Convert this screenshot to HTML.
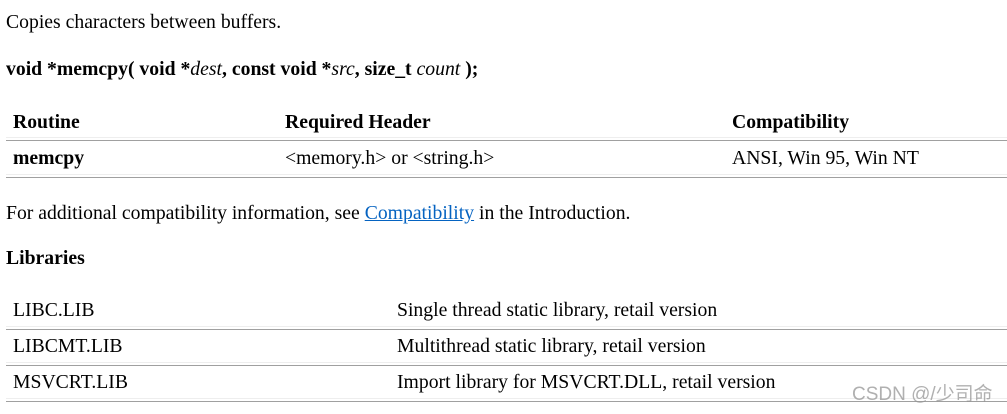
<!DOCTYPE html>
<html><head><style>
body{margin:0;width:1007px;height:414px;background:#fff;font-family:"Liberation Serif",serif;font-size:19.7px;color:#000;position:relative;overflow:hidden}
.t{position:absolute;white-space:nowrap;line-height:20px}
.b{font-weight:bold}
.l{position:absolute;left:6px;right:0;height:1px;background:#eee}
.g{position:absolute;left:6px;right:0;height:1px;background:#a0a0a0}
a{color:#0563c1}
</style></head><body>
<div class="t" style="left:6px;top:12px">Copies characters between buffers.</div>
<div class="t b" style="left:6px;top:59px">void *memcpy( void *<i style="font-weight:normal">dest</i>, const void *<i style="font-weight:normal">src</i>, size_t <i style="font-weight:normal">count</i> );</div>
<div class="t b" style="left:13px;top:112px">Routine</div>
<div class="t b" style="left:285px;top:112px">Required Header</div>
<div class="t b" style="left:732px;top:112px">Compatibility</div>
<div class="l" style="top:137px"></div><div class="g" style="top:140px"></div>
<div class="t b" style="left:13px;top:148px">memcpy</div>
<div class="t" style="left:285px;top:148px">&lt;memory.h&gt; or &lt;string.h&gt;</div>
<div class="t" style="left:732px;top:148px">ANSI, Win 95, Win NT</div>
<div class="l" style="top:174px"></div><div class="g" style="top:177px"></div>
<div class="t" style="left:6px;top:203px">For additional compatibility information, see <a href="#">Compatibility</a> in the Introduction.</div>
<div class="t b" style="left:6px;top:248px">Libraries</div>
<div class="t" style="left:13px;top:300px">LIBC.LIB</div>
<div class="t" style="left:397px;top:300px">Single thread static library, retail version</div>
<div class="l" style="top:326px"></div><div class="g" style="top:329px"></div>
<div class="t" style="left:13px;top:336px">LIBCMT.LIB</div>
<div class="t" style="left:397px;top:336px">Multithread static library, retail version</div>
<div class="l" style="top:362px"></div><div class="g" style="top:365px"></div>
<div class="t" style="left:13px;top:372px">MSVCRT.LIB</div>
<div class="t" style="left:397px;top:372px">Import library for MSVCRT.DLL, retail version</div>
<div class="l" style="top:398px"></div><div class="g" style="top:401px"></div>
<div class="t" style="left:852px;top:385px;font-family:'Liberation Sans','Noto Sans CJK SC',sans-serif;font-size:19px;color:rgba(150,150,150,0.75)">CSDN @/少司命</div>
</body></html>
